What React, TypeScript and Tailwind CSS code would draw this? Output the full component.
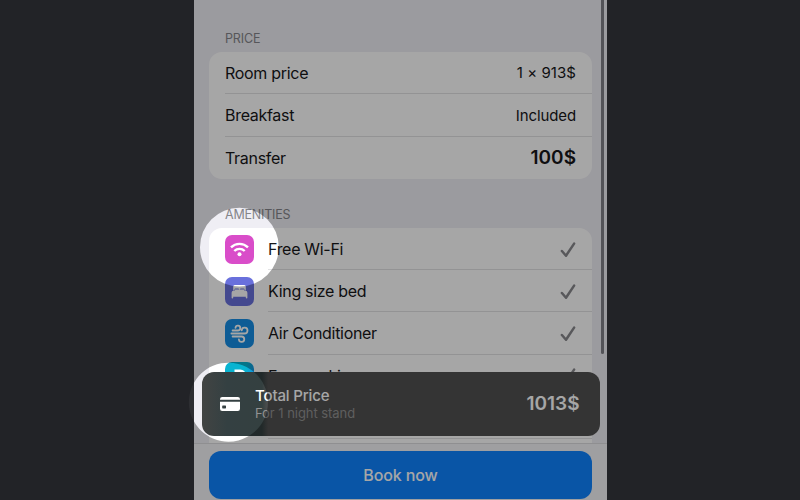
import type { ReactNode } from 'react';

function Check() {
  return (
    <svg className="mt-px h-4 w-4" viewBox="0 0 16 16" fill="none">
      <path d="M1.9 9 6 13.7 14.1 1.6" stroke="#88888c" strokeWidth="2.5" strokeLinecap="round" strokeLinejoin="round" />
    </svg>
  );
}

function WifiIcon() {
  return (
    <svg className="h-[29px] w-[29px]" viewBox="0 0 29 29" fill="none" stroke="white" strokeWidth="2.4">
      <path d="M6 12.3a12.2 12.2 0 0 1 17 0" />
      <path d="M9.3 16a7.4 7.4 0 0 1 10.4 0" />
      <circle cx="14.5" cy="19.2" r="2" fill="white" stroke="none" />
    </svg>
  );
}

function BedIcon() {
  return (
    <svg className="h-[29px] w-[29px]" viewBox="0 0 29 29" fill="white">
      <path d="M8.2 13.4V9.6A1.6 1.6 0 0 1 9.8 8h9.4a1.6 1.6 0 0 1 1.6 1.6v3.8h-1.3v-1.2a.8.8 0 0 0-.8-.8h-2.9a.8.8 0 0 0-.8.8v.5h-1v-.5a.8.8 0 0 0-.8-.8h-2.9a.8.8 0 0 0-.8.8v1.2z" />
      <path d="M9.8 13.8v-1.2h9.4v1.2h1.3a2 2 0 0 1 1.9 2v5a.8.8 0 0 1-1.6 0v-1H8.2v1a.8.8 0 0 1-1.6 0v-5a2 2 0 0 1 1.9-2z" />
    </svg>
  );
}

function WindIcon() {
  return (
    <svg className="h-[29px] w-[29px]" viewBox="0 0 29 29" fill="none" stroke="white" strokeWidth="1.8" strokeLinecap="round">
      <path d="M7.6 11.5h5.3a2.4 2.4 0 1 0-2.4-2.7" />
      <path d="M6.4 14.5h13.2a2.9 2.9 0 1 0-2.9-3.2" />
      <path d="M7.6 17.5h9a2.7 2.7 0 1 1-2.7 3" />
    </svg>
  );
}

function ParkingIcon() {
  return (
    <svg className="h-[29px] w-[29px]" viewBox="0 0 29 29" fill="none">
      <path d="M11 22V9h4.3a4 4 0 0 1 0 8H11" stroke="white" strokeWidth="3" />
    </svg>
  );
}

function CardIcon() {
  return (
    <svg className="h-[14px] w-5" viewBox="0 0 20 14">
      <path fill="white" d="M2.2 0h15.6A2.2 2.2 0 0 1 20 2.2v.6H0v-.6A2.2 2.2 0 0 1 2.2 0z" />
      <path fill="white" fillRule="evenodd" d="M0 4.8h20v7a2.2 2.2 0 0 1-2.2 2.2H2.2A2.2 2.2 0 0 1 0 11.8zM2.2 9v1.8a.6.6 0 0 0 .6.6h2.6a.6.6 0 0 0 .6-.6V9a.6.6 0 0 0-.6-.6H2.8a.6.6 0 0 0-.6.6z" />
    </svg>
  );
}

function PriceRow({ label, value, last }: { label: string; value: ReactNode; last?: boolean }) {
  return (
    <div className={`ml-4 flex h-[42.2px] items-center justify-between pr-4 ${last ? '' : 'border-b border-[#e2e2e4]'}`}>
      <span className="tracking-[-0.3px]">{label}</span>
      {value}
    </div>
  );
}

function Amenity({ label, icon, color }: { label: string; icon: ReactNode; color: string }) {
  return (
    <div className="flex h-[42.2px] pl-4">
      <div className={`mt-[7px] h-[29px] w-[29px] shrink-0 rounded-[7px] ${color}`}>{icon}</div>
      <div className="ml-[14px] flex grow items-center justify-between border-b border-[#e2e2e4] pr-4 pt-px">
        <span className="tracking-[-0.31px]">{label}</span>
        <Check />
      </div>
    </div>
  );
}

export default function App() {
  return (
    <div className="flex h-[500px] w-[800px] justify-center overflow-hidden bg-[#222327] font-['Inter','Liberation_Sans',sans-serif] text-[16px] leading-5 text-[#17171a]">
      <main className="relative mr-[-1px] h-[500px] w-[413px] bg-[#efeef4]">
        <div className="px-[15px]">
          <h2 className="h-[52px] pl-4 pt-[29px] text-[12.5px] tracking-[-0.15px] text-[#85858a]">PRICE</h2>
          <section className="h-[127px] rounded-[13px] bg-white pt-[0.3px]">
            <PriceRow label="Room price" value={<span className="pt-px text-[15px] tracking-[0.05px]">1 × 913$</span>} />
            <PriceRow label="Breakfast" value={<span className="pt-px text-[15px] tracking-[-0.1px]">Included</span>} />
            <PriceRow label="Transfer" last value={<span className="pt-px text-[19px] font-semibold">100$</span>} />
          </section>
          <h2 className="h-[49px] pl-4 pt-[26px] text-[12.5px] tracking-[-0.2px] text-[#85858a]">AMENITIES</h2>
          <section className="h-[230px] rounded-t-[13px] bg-white">
            <Amenity label="Free Wi-Fi" icon={<WifiIcon />} color="bg-[#d94dc9]" />
            <Amenity label="King size bed" icon={<BedIcon />} color="bg-[#6970dc]" />
            <Amenity label="Air Conditioner" icon={<WindIcon />} color="bg-[#168ee5]" />
            <Amenity label="Free parking" icon={<ParkingIcon />} color="bg-[linear-gradient(100deg,#08b4d1_65%,#168ee5_95%)]" />
            <div className="ml-[59px] h-[42.2px] border-b border-[#e2e2e4]" />
          </section>
        </div>
        <footer className="absolute inset-x-0 bottom-0 h-[57px] border-t border-[#dcdcdf] bg-[#f5f5f7] px-[15px] pt-[7px]">
          <button className="h-[48px] w-full rounded-[12px] bg-[#0f83ff] text-[16px] font-medium tracking-[-0.1px] text-white">Book now</button>
        </footer>
        <div className="absolute right-[3px] top-0 h-[354px] w-[3px] rounded-b-full bg-[#808087]" />
        <div className="absolute left-[7.5px] top-[372px] flex h-[64px] w-[398px] items-center rounded-[12px] bg-[linear-gradient(90deg,#424443_0px,#344042_25px,#344040_60px,#505050_66px)] pl-[18.5px] pr-[20px] text-white">
          <CardIcon />
          <div className="ml-[15px] grow leading-[18px]">
            <div className="pt-px text-[15px] font-medium tracking-[-0.15px]">Total Price</div>
            <div className="mt-[-1px] text-[13px] tracking-[-0.05px] text-[#929292]">For 1 night stand</div>
          </div>
          <div className="text-[19px] font-semibold">1013$</div>
        </div>
        <svg className="absolute left-[-6px] top-0 h-[500px] w-[419px]" viewBox="188 0 419 500">
          <path d="M194 382.6a39.5 39.5 0 0 0 0 39.2z" fill="white" fillOpacity="0.05" />
          <path
            fill="black"
            fillOpacity="0.35"
            fillRule="evenodd"
            d="M194 0H607V500H194V421.6A39.5 39.5 0 1 0 194 382.8zM200 247.2a39.4 39.4 0 1 0 78.8 0a39.4 39.4 0 1 0-78.8 0z"
          />
        </svg>
      </main>
    </div>
  );
}
